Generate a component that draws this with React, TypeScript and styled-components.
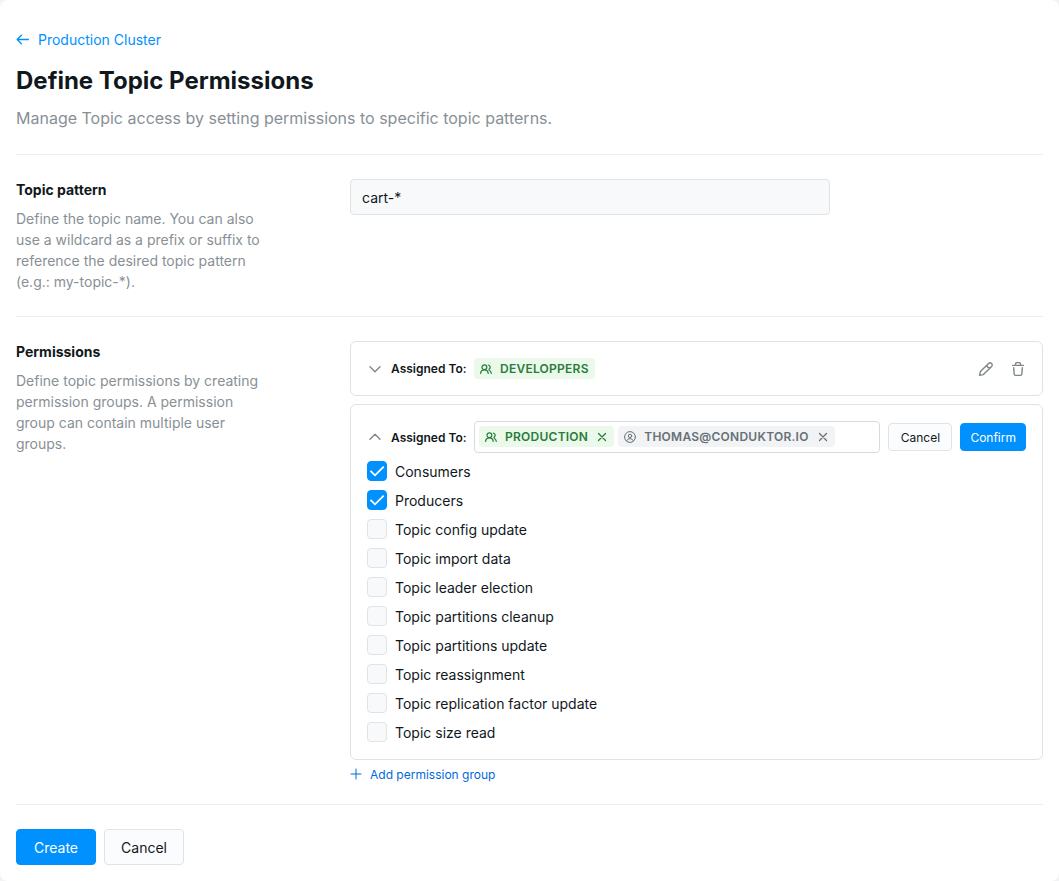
import React, { useState } from "react";
import styled, { createGlobalStyle, css } from "styled-components";

const GlobalStyle = createGlobalStyle`
  *, *::before, *::after { box-sizing: border-box; }
  body {
    margin: 0;
    background: #f1f3f5;
    color: #11181c;
    font-family: Inter, "Liberation Sans", sans-serif;
    font-size: 14px;
    line-height: 21px;
  }
  button, input { font: inherit; color: inherit; }
`;

const Page = styled.main`
  background: #ffffff;
  border-radius: 8px;
  padding: 28px 16px 16px;
`;

const BackLink = styled.a`
  display: inline-flex;
  align-items: center;
  gap: 8px;
  color: #0091ff;
  line-height: 24px;
  text-decoration: none;
`;

const Title = styled.h1`
  margin: 12px 0 8px;
  font-size: 24px;
  line-height: 34px;
  font-weight: 700;
`;

const Subtitle = styled.p`
  margin: 0 0 24px;
  color: #889096;
  font-size: 16px;
  line-height: 24px;
`;

const Section = styled.section`
  display: grid;
  grid-template-columns: 250px minmax(0, 1fr);
  column-gap: 84px;
  align-items: start;
  padding: 24px 0;
  border-top: 1px solid #eceef0;
`;

const sectionHeading = css`
  display: block;
  margin: 0 0 8px;
  font-size: 14px;
  line-height: 21px;
  font-weight: 700;
`;

const FieldLabel = styled.label`
  ${sectionHeading}
`;

const SectionTitle = styled.h2`
  ${sectionHeading}
`;

const Description = styled.p`
  margin: 0;
  color: #889096;
`;

const TextInput = styled.input`
  width: 100%;
  max-width: 480px;
  height: 36px;
  padding: 0 11px;
  border: 1px solid #dfe3e6;
  border-radius: 4px;
  background: #f8f9fa;
`;

const Groups = styled.div`
  display: flex;
  flex-direction: column;
  align-items: stretch;
  gap: 8px;
`;

const Card = styled.article`
  padding: 16px;
  border: 1px solid #dfe3e6;
  border-radius: 6px;
`;

const CardHeader = styled.div`
  display: flex;
  align-items: center;
  gap: 8px;
`;

const AssignedLabel = styled.span`
  width: 75px;
  font-size: 12px;
  line-height: 21px;
  font-weight: 600;
  white-space: nowrap;
`;

const IconButton = styled.button`
  display: flex;
  align-items: center;
  justify-content: center;
  width: 16px;
  height: 16px;
  padding: 0;
  border: 0;
  background: none;
  color: #7e868c;
  cursor: pointer;
`;

const CardActions = styled.div`
  display: flex;
  gap: 16px;
  margin-left: auto;
`;

const Tag = styled.span<{ $tone: "green" | "gray" }>`
  display: inline-flex;
  align-items: center;
  gap: 8px;
  height: 21px;
  padding: 0 6px;
  border-radius: 4px;
  font-size: 12px;
  line-height: 20px;
  font-weight: 600;
  letter-spacing: 0.25px;
  text-transform: uppercase;
  white-space: nowrap;
  color: ${(p) => (p.$tone === "green" ? "#297c3b" : "#687076")};
  background: ${(p) => (p.$tone === "green" ? "#ebf9eb" : "#f1f3f5")};
`;

const TagRemove = styled.button`
  display: flex;
  width: 12px;
  height: 12px;
  padding: 0;
  border: 0;
  background: none;
  cursor: pointer;
`;

const TagField = styled.div`
  display: flex;
  flex: 1;
  align-items: flex-start;
  gap: 4px;
  min-width: 0;
  height: 32px;
  padding: 4px;
  border: 1px solid #d7dbdf;
  border-radius: 4px;
`;

const TagInput = styled.input`
  flex: 1;
  min-width: 0;
  padding: 0;
  border: 0;
  outline: 0;
  background: none;
`;

const Button = styled.button<{ $primary?: boolean; $small?: boolean }>`
  height: ${(p) => (p.$small ? 28 : 36)}px;
  padding: 0 ${(p) => (p.$small ? (p.$primary ? 9 : 11) : p.$primary ? 17 : 16)}px;
  min-width: ${(p) => (p.$small ? 64 : 80)}px;
  border: 1px solid ${(p) => (p.$primary ? "#0091ff" : "#dfe3e6")};
  border-radius: 4px;
  background: ${(p) => (p.$primary ? "#0091ff" : "#fbfcfd")};
  color: ${(p) => (p.$primary ? "#ffffff" : "#11181c")};
  font-size: ${(p) => (p.$small ? 12 : 14)}px;
  cursor: pointer;
  white-space: nowrap;
`;

const PermissionList = styled.ul`
  display: flex;
  flex-direction: column;
  gap: 8px;
  margin: 8px 0 0;
  padding: 0;
  list-style: none;
`;

const PermissionRow = styled.label`
  display: flex;
  align-items: flex-start;
  gap: 8px;
  height: 21px;
  cursor: pointer;
`;

const Box = styled.span`
  display: grid;
  width: 20px;
  height: 20px;

  > * { grid-area: 1 / 1; }
  svg { place-self: center; pointer-events: none; visibility: hidden; }
  input:checked + svg { visibility: visible; }
`;

const BoxInput = styled.input`
  appearance: none;
  width: 20px;
  height: 20px;
  margin: 0;
  border: 1px solid #dfe3e6;
  border-radius: 4px;
  background: #f8f9fa;

  &:checked {
    border-color: #0091ff;
    background: #0091ff;
  }
`;

const AddButton = styled.button`
  display: flex;
  align-items: center;
  align-self: flex-start;
  gap: 8px;
  height: 12px;
  padding: 0;
  border: 0;
  background: none;
  color: #006adc;
  font-size: 12px;
  cursor: pointer;
`;

const Footer = styled.footer`
  display: flex;
  gap: 8px;
  padding-top: 24px;
  border-top: 1px solid #eceef0;
`;

type StrokeIconProps = { size: number; box?: number; width?: number; children: React.ReactNode };

function StrokeIcon({ size, box = size, width = 1, children }: StrokeIconProps) {
  return (
    <svg
      width={size}
      height={size}
      viewBox={`0 0 ${box} ${box}`}
      fill="none"
      stroke="currentColor"
      strokeWidth={width}
      strokeLinecap="round"
      strokeLinejoin="round"
      aria-hidden="true"
    >
      {children}
    </svg>
  );
}

const CloseIcon = () => (
  <StrokeIcon size={12} width={1.3}>
    <path d="M2.5 2.5l7 7M9.5 2.5l-7 7" />
  </StrokeIcon>
);

const GroupIcon = () => (
  <StrokeIcon size={12} width={1.2}>
    <circle cx="4.4" cy="4.2" r="2.4" />
    <path d="M0.6 10.4C0.8 8.2 2.2 6.8 4.4 6.8S8 8.2 8.2 10.4M8.2 2a2.3 2.3 0 0 1 0.7 4.3M9.2 7.2c1.2 0.6 1.9 1.7 2.1 3.2" />
  </StrokeIcon>
);

const UserIcon = () => (
  <StrokeIcon size={12} width={1}>
    <circle cx="6" cy="6" r="5.4" />
    <circle cx="6" cy="4.9" r="1.7" />
    <path d="M2.7 9.8C3.2 8.4 4.4 7.7 6 7.7S8.8 8.4 9.3 9.8" />
  </StrokeIcon>
);

function GroupTag({ name, onRemove }: { name: string; onRemove?: () => void }) {
  return (
    <Tag $tone="green">
      <GroupIcon />
      {name}
      {onRemove && (
        <TagRemove type="button" aria-label={`Remove ${name}`} onClick={onRemove}>
          <CloseIcon />
        </TagRemove>
      )}
    </Tag>
  );
}

function UserTag({ name, onRemove }: { name: string; onRemove: () => void }) {
  return (
    <Tag $tone="gray">
      <UserIcon />
      {name}
      <TagRemove type="button" aria-label={`Remove ${name}`} onClick={onRemove}>
        <CloseIcon />
      </TagRemove>
    </Tag>
  );
}

const PERMISSIONS = [
  "Consumers",
  "Producers",
  "Topic config update",
  "Topic import data",
  "Topic leader election",
  "Topic partitions cleanup",
  "Topic partitions update",
  "Topic reassignment",
  "Topic replication factor update",
  "Topic size read",
];

export default function App() {
  const [assignees, setAssignees] = useState([
    { name: "Production", kind: "group" },
    { name: "thomas@conduktor.io", kind: "user" },
  ]);
  const remove = (name: string) => setAssignees((all) => all.filter((a) => a.name !== name));

  return (
    <>
      <GlobalStyle />
      <Page>
        <BackLink href="#cluster">
          <StrokeIcon size={14} width={1.3}>
            <path d="M12.4 6.5H1.2M5.4 2.2L1.2 6.5L5.4 10.8" />
          </StrokeIcon>
          Production Cluster
        </BackLink>
        <Title>Define Topic Permissions</Title>
        <Subtitle>Manage Topic access by setting permissions to specific topic patterns.</Subtitle>

        <Section>
          <div>
            <FieldLabel htmlFor="pattern">Topic pattern</FieldLabel>
            <Description>
              Define the topic name. You can also use a wildcard as a prefix or suffix to reference
              the desired topic pattern (e.g.: my-topic-*).
            </Description>
          </div>
          <TextInput id="pattern" type="text" defaultValue="cart-*" />
        </Section>

        <Section>
          <div>
            <SectionTitle>Permissions</SectionTitle>
            <Description>
              Define topic permissions by creating permission groups. A permission group can contain
              multiple user groups.
            </Description>
          </div>
          <Groups>
            <Card>
              <CardHeader>
                <IconButton type="button" aria-label="Expand group">
                  <StrokeIcon size={16} width={1.4}>
                    <path d="M3 5.8L8 10.8L13 5.8" />
                  </StrokeIcon>
                </IconButton>
                <AssignedLabel>Assigned To:</AssignedLabel>
                <GroupTag name="Developpers" />
                <CardActions>
                  <IconButton type="button" aria-label="Edit group">
                    <StrokeIcon size={16} width={1.4}>
                      <path d="M1.6 14.4L2.4 10.6L10.6 2.4a2.1 2.1 0 0 1 3 3L5.4 13.6L1.6 14.4zM9.8 3.2a2.1 2.1 0 0 0 3 3" />
                    </StrokeIcon>
                  </IconButton>
                  <IconButton type="button" aria-label="Delete group">
                    <StrokeIcon size={16} width={1.4}>
                      <path d="M2.5 4.4h11M5.6 4.2V2.6a1 1 0 0 1 1-1h2.8a1 1 0 0 1 1 1V4.2M3.7 6.7l.5 6.6a1.2 1.2 0 0 0 1.2 1.1h5.2a1.2 1.2 0 0 0 1.2-1.1l.5-6.6" />
                    </StrokeIcon>
                  </IconButton>
                </CardActions>
              </CardHeader>
            </Card>

            <Card>
              <CardHeader>
                <IconButton type="button" aria-label="Collapse group">
                  <StrokeIcon size={16} width={1.4}>
                    <path d="M3 10.2L8 5.2L13 10.2" />
                  </StrokeIcon>
                </IconButton>
                <AssignedLabel>Assigned To:</AssignedLabel>
                <TagField>
                  {assignees.map(({ name, kind }) =>
                    kind === "group" ? (
                      <GroupTag key={name} name={name} onRemove={() => remove(name)} />
                    ) : (
                      <UserTag key={name} name={name} onRemove={() => remove(name)} />
                    )
                  )}
                  <TagInput type="text" aria-label="Assign to" />
                </TagField>
                <Button type="button" $small>Cancel</Button>
                <Button type="button" $small $primary>Confirm</Button>
              </CardHeader>
              <PermissionList>
                {PERMISSIONS.map((permission, index) => (
                  <li key={permission}>
                    <PermissionRow>
                      <Box>
                        <BoxInput type="checkbox" defaultChecked={index < 2} />
                        <svg width="16" height="16" viewBox="0 0 16 16" fill="none" stroke="#fff" strokeWidth="1.8" aria-hidden="true">
                          <path d="M1.5 7.8L6 12.3L14.7 3.6" />
                        </svg>
                      </Box>
                      {permission}
                    </PermissionRow>
                  </li>
                ))}
              </PermissionList>
            </Card>
            <AddButton type="button">
              <StrokeIcon size={12}>
                <path d="M6 1v10M1 6h10" />
              </StrokeIcon>
              Add permission group
            </AddButton>
          </Groups>
        </Section>

        <Footer>
          <Button type="button" $primary>Create</Button>
          <Button type="button">Cancel</Button>
        </Footer>
      </Page>
    </>
  );
}
